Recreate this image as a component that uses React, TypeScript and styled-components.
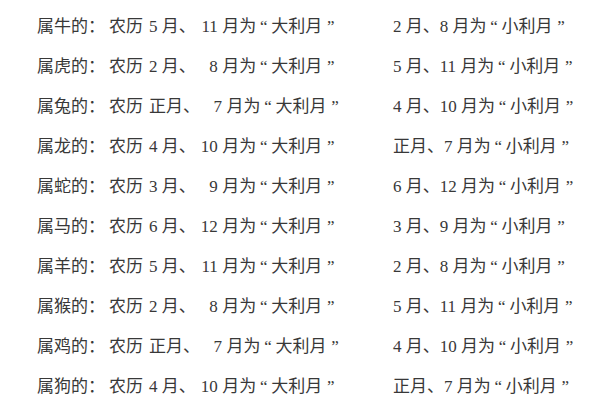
import React from "react";
import styled, { createGlobalStyle } from "styled-components";

const GlobalStyle = createGlobalStyle`
  html, body {
    margin: 0;
    padding: 0;
    background: #ffffff;
  }
  body {
    font-family: "Liberation Serif", "Noto Sans CJK SC", serif;
  }
`;

const Page = styled.div`
  width: 600px;
  height: 400px;
  box-sizing: border-box;
  padding: 7px 0 0 37px;
  background: #ffffff;
  color: #383838;
  font-size: 17px;
  overflow: hidden;
`;

const Row = styled.div`
  display: grid;
  grid-template-columns: 356px 1fr;
  align-items: center;
  height: 40px;
  line-height: 40px;
  white-space: nowrap;
`;

const Cell = styled.div`
  display: flex;
  align-items: baseline;
`;

const Label = styled.span`
  width: 72px;
`;

const Month = styled.span<{ $slot?: number; $gap?: number }>`
  display: inline-block;
  width: ${({ $slot }) => ($slot ? `${$slot}px` : "auto")};
  margin-left: ${({ $gap }) => $gap ?? 0}px;
  text-align: right;
`;

const Tail = styled.span`
  margin-left: 4.5px;
`;

const Quote = styled.span<{ $w: number }>`
  display: inline-block;
  width: ${({ $w }) => $w}px;
  text-align: center;
`;

type Item = {
  animal: string;
  first: string;
  second: string;
  small: [string, string];
};

const items: Item[] = [
  { animal: "牛", first: "5", second: "11", small: ["2", "8"] },
  { animal: "虎", first: "2", second: "8", small: ["5", "11"] },
  { animal: "兔", first: "正", second: "7", small: ["4", "10"] },
  { animal: "龙", first: "4", second: "10", small: ["正", "7"] },
  { animal: "蛇", first: "3", second: "9", small: ["6", "12"] },
  { animal: "马", first: "6", second: "12", small: ["3", "9"] },
  { animal: "羊", first: "5", second: "11", small: ["2", "8"] },
  { animal: "猴", first: "2", second: "8", small: ["5", "11"] },
  { animal: "鸡", first: "正", second: "7", small: ["4", "10"] },
  { animal: "狗", first: "4", second: "10", small: ["正", "7"] },
];

// "正" is written straight against 月, digits get a space
const monthText = (m: string) => (m === "正" ? "正月" : `${m} 月`);

const Quoted: React.FC<{ text: string; open?: number }> = ({ text, open = 15 }) => (
  <>
    <Quote $w={open}>“</Quote>
    {text}
    <Quote $w={17}>”</Quote>
  </>
);

export default function App() {
  return (
    <>
      <GlobalStyle />
      <Page>
        {items.map(item => (
          <Row key={item.animal}>
            <Cell>
              <Label>属{item.animal}的：</Label>
              农历
              <Month $gap={6}>{monthText(item.first)}</Month>
              、
              <Month $slot={22}>{item.second}</Month>
              <Tail>
                月为
                <Quoted text="大利月" />
              </Tail>
            </Cell>
            <Cell>
              {monthText(item.small[0])}、{item.small[1]} 月为
              <Quoted text="小利月" />
            </Cell>
          </Row>
        ))}
      </Page>
    </>
  );
}
